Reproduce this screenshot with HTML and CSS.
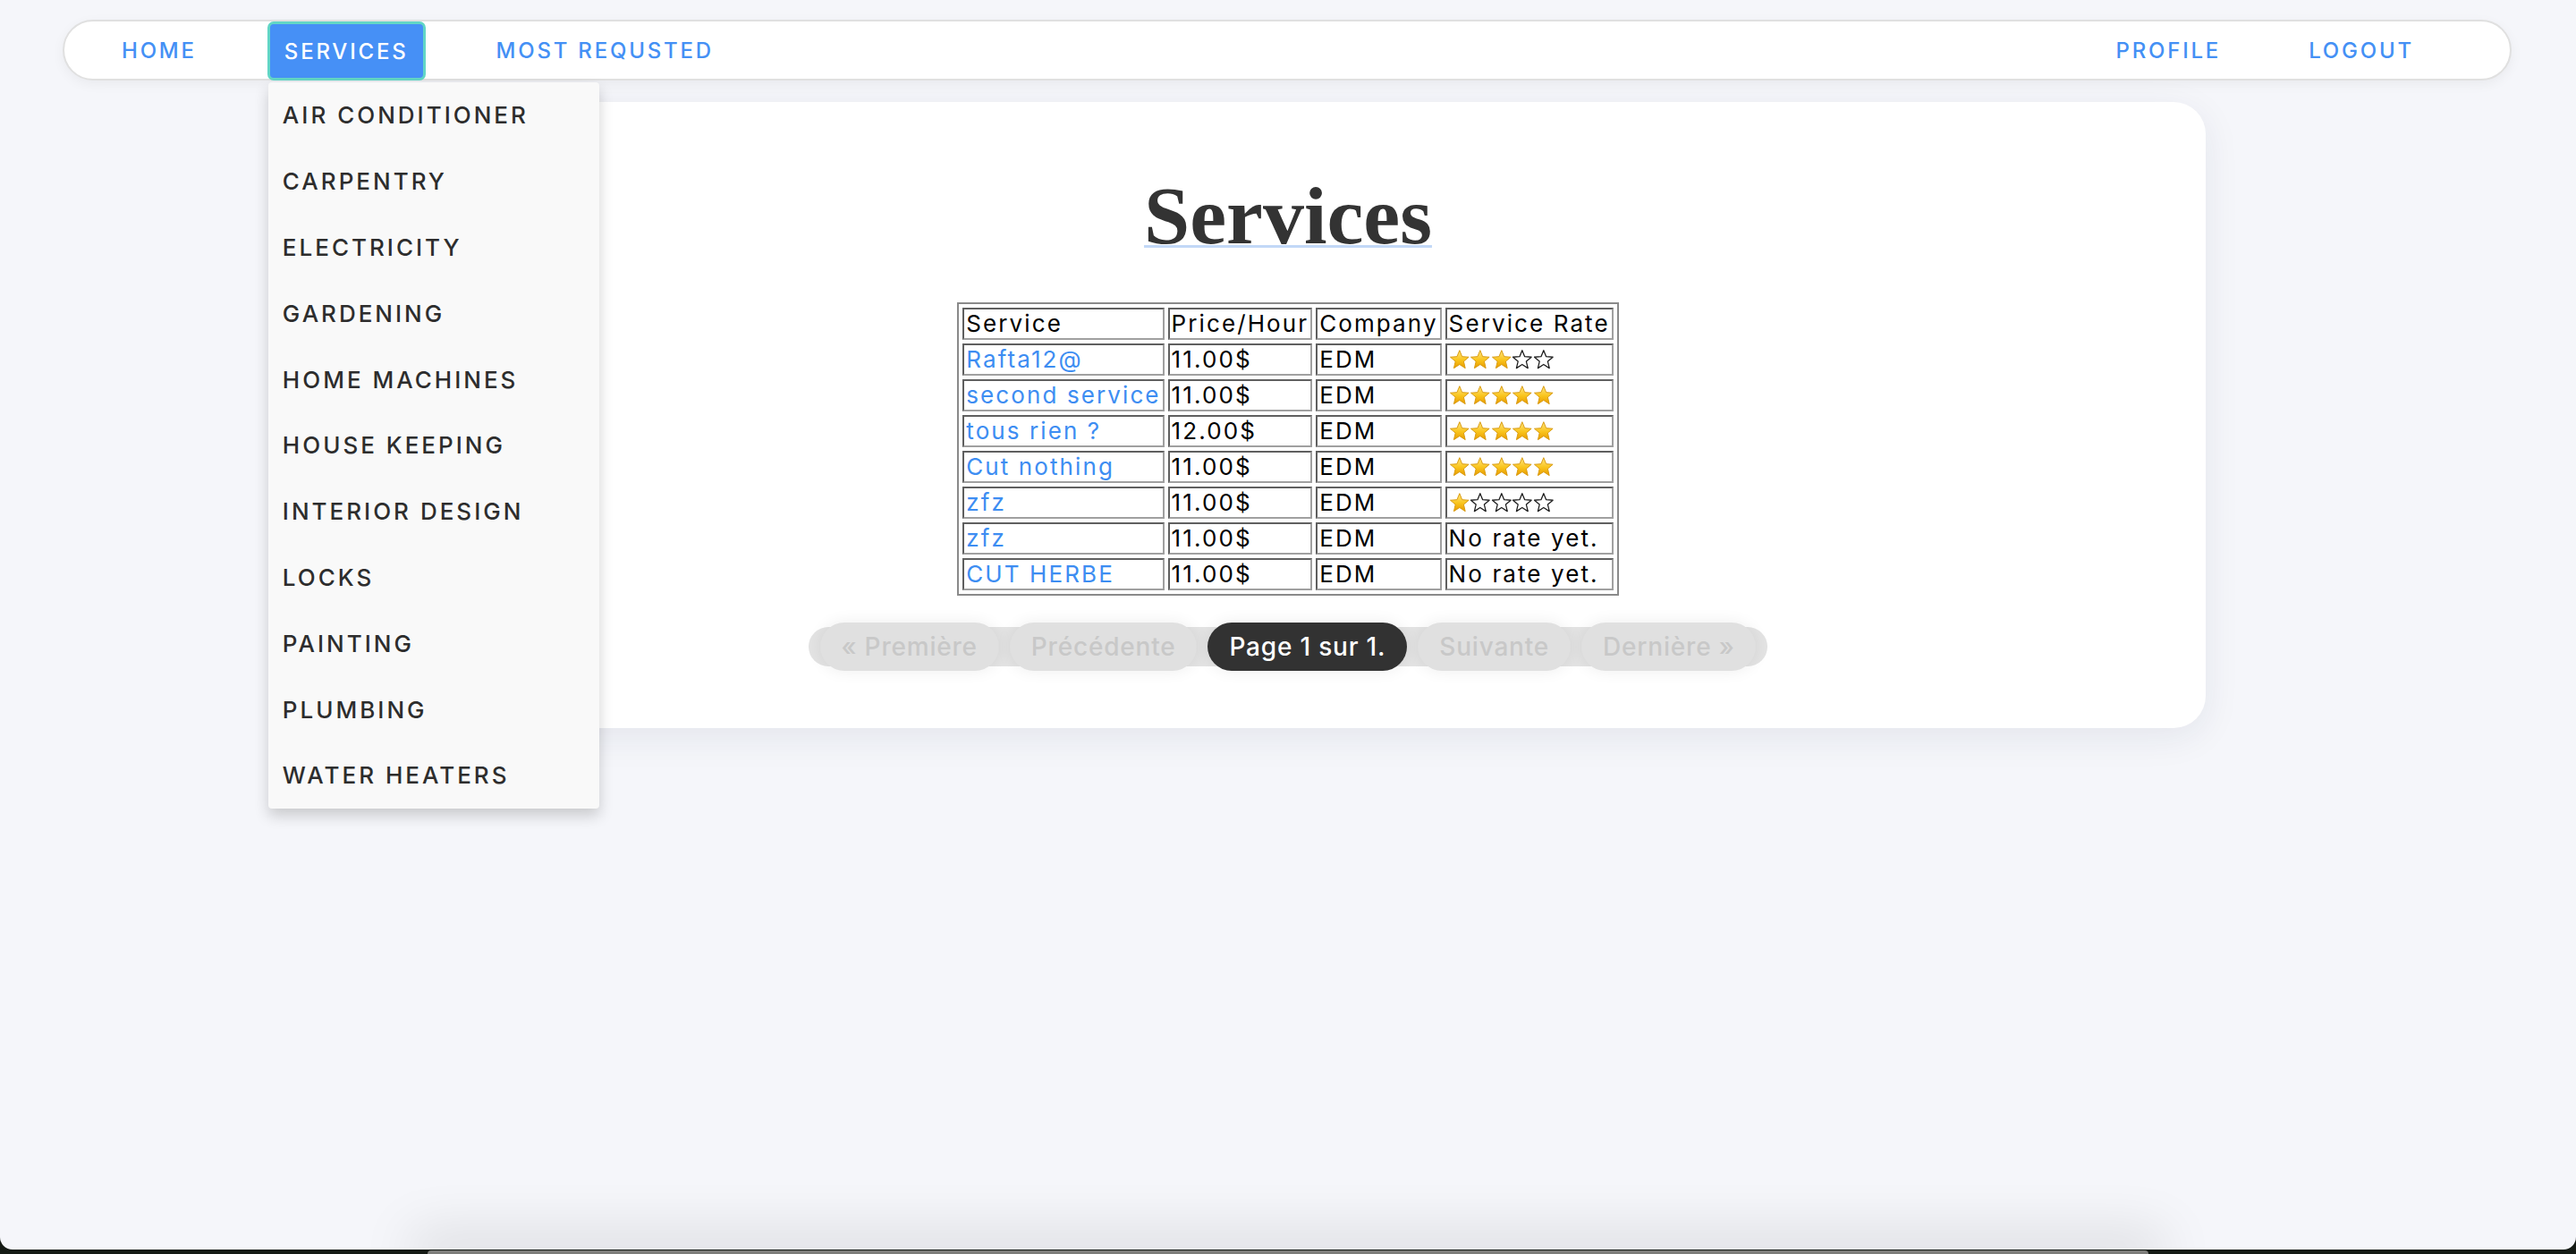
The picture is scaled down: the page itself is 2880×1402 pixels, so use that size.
FILE: index.html
```html
<!DOCTYPE html>
<html lang="en">
<head>
<meta charset="utf-8">
<title>Services</title>
<link rel="stylesheet" href="styles.css">
</head>
<body>
<svg class="defs" width="0" height="0" aria-hidden="true">
  <defs>
    <linearGradient id="gold" x1="0" y1="0" x2="0" y2="1">
      <stop offset="0" stop-color="#ffe680"/>
      <stop offset="0.55" stop-color="#f9c41c"/>
      <stop offset="1" stop-color="#e89a00"/>
    </linearGradient>
    <symbol id="star-full" viewBox="0 0 24 24">
      <polygon points="12,1.5 14.9,8.6 22.5,9.2 16.7,14.1 18.5,21.8 12,17.6 5.5,21.8 7.3,14.1 1.5,9.2 9.1,8.6" fill="url(#gold)" stroke="#d89a10" stroke-width="1" stroke-linejoin="round"/>
    </symbol>
    <symbol id="star-empty" viewBox="0 0 24 24">
      <polygon points="12,1.5 14.9,8.6 22.5,9.2 16.7,14.1 18.5,21.8 12,17.6 5.5,21.8 7.3,14.1 1.5,9.2 9.1,8.6" fill="#fff" stroke="#1e1e1e" stroke-width="1.3" stroke-linejoin="round"/>
    </symbol>
  </defs>
</svg>
<div class="window">
  <nav class="topnav">
    <ul class="nav-group">
      <li><a class="nav-link" href="#">HOME</a></li>
      <li class="has-menu">
        <a class="nav-link active" href="#">SERVICES</a>
        <ul class="dropdown">
          <li><a href="#">AIR CONDITIONER</a></li>
          <li><a href="#">CARPENTRY</a></li>
          <li><a href="#">ELECTRICITY</a></li>
          <li><a href="#">GARDENING</a></li>
          <li><a href="#">HOME MACHINES</a></li>
          <li><a href="#">HOUSE KEEPING</a></li>
          <li><a href="#">INTERIOR DESIGN</a></li>
          <li><a href="#">LOCKS</a></li>
          <li><a href="#">PAINTING</a></li>
          <li><a href="#">PLUMBING</a></li>
          <li><a href="#">WATER HEATERS</a></li>
        </ul>
      </li>
      <li><a class="nav-link" href="#">MOST REQUSTED</a></li>
    </ul>
    <ul class="nav-group">
      <li><a class="nav-link" href="#">PROFILE</a></li>
      <li><a class="nav-link" href="#">LOGOUT</a></li>
    </ul>
  </nav>

  <main class="card">
    <h1 class="title"><a href="#">Services</a></h1>
    <table class="services">
      <tr><td>Service</td><td>Price/Hour</td><td>Company</td><td>Service Rate</td></tr>
      <tr><td><a href="#">Rafta12@</a></td><td>11.00$</td><td>EDM</td>
        <td class="rate"><svg class="star"><use href="#star-full"/></svg><svg class="star"><use href="#star-full"/></svg><svg class="star"><use href="#star-full"/></svg><svg class="star"><use href="#star-empty"/></svg><svg class="star"><use href="#star-empty"/></svg></td></tr>
      <tr><td><a href="#">second service</a></td><td>11.00$</td><td>EDM</td>
        <td class="rate"><svg class="star"><use href="#star-full"/></svg><svg class="star"><use href="#star-full"/></svg><svg class="star"><use href="#star-full"/></svg><svg class="star"><use href="#star-full"/></svg><svg class="star"><use href="#star-full"/></svg></td></tr>
      <tr><td><a href="#">tous rien ?</a></td><td>12.00$</td><td>EDM</td>
        <td class="rate"><svg class="star"><use href="#star-full"/></svg><svg class="star"><use href="#star-full"/></svg><svg class="star"><use href="#star-full"/></svg><svg class="star"><use href="#star-full"/></svg><svg class="star"><use href="#star-full"/></svg></td></tr>
      <tr><td><a href="#">Cut nothing</a></td><td>11.00$</td><td>EDM</td>
        <td class="rate"><svg class="star"><use href="#star-full"/></svg><svg class="star"><use href="#star-full"/></svg><svg class="star"><use href="#star-full"/></svg><svg class="star"><use href="#star-full"/></svg><svg class="star"><use href="#star-full"/></svg></td></tr>
      <tr><td><a href="#">zfz</a></td><td>11.00$</td><td>EDM</td>
        <td class="rate"><svg class="star"><use href="#star-full"/></svg><svg class="star"><use href="#star-empty"/></svg><svg class="star"><use href="#star-empty"/></svg><svg class="star"><use href="#star-empty"/></svg><svg class="star"><use href="#star-empty"/></svg></td></tr>
      <tr><td><a href="#">zfz</a></td><td>11.00$</td><td>EDM</td><td>No rate yet.</td></tr>
      <tr><td><a href="#">CUT HERBE</a></td><td>11.00$</td><td>EDM</td><td>No rate yet.</td></tr>
    </table>

    <div class="pager">
      <span class="pill">« Première</span>
      <span class="pill">Précédente</span>
      <span class="pill current">Page 1 sur 1.</span>
      <span class="pill">Suivante</span>
      <span class="pill">Dernière »</span>
    </div>
  </main>

  <div class="footer-shadow"></div>
</div>
<div class="peek"></div>
</body>
</html>
```

FILE: styles.css
```css
html, body {
  margin: 0;
  padding: 0;
}

body {
  background: #141a14;
  font-family: "Inter", "Open Sans", sans-serif;
}

.defs {
  position: absolute;
  width: 0;
  height: 0;
}

.window {
  height: 1397px;
  background: #f5f6fa;
  border-radius: 0 0 14px 14px;
  overflow: hidden;
  display: flex;
  flex-direction: column;
}

/* ---------- top navigation ---------- */
.topnav {
  position: relative;
  z-index: 10;
  margin: 22px 72px 0 70px;
  height: 68px;
  box-sizing: border-box;
  border: 2px solid #e0e0e0;
  border-radius: 34px;
  background: #fff;
  box-shadow: 0 4px 14px rgba(0, 0, 0, 0.05);
  display: flex;
  justify-content: space-between;
  padding: 0 88px 0 45px;
  flex-shrink: 0;
}

.nav-group {
  list-style: none;
  margin: 0;
  padding: 0;
  display: flex;
  gap: 60px;
  height: 100%;
}

.nav-group > li {
  height: 100%;
  position: relative;
}

.nav-link {
  display: flex;
  align-items: center;
  box-sizing: border-box;
  height: 100%;
  padding: 0 19px;
  color: #4490f5;
  font-size: 24px;
  font-weight: 500;
  letter-spacing: 2.8px;
  text-decoration: none;
}

.nav-link.active {
  height: calc(100% + 2px);
  padding: 0 16px;
  background: #4690f6;
  color: #fff;
  border: 3px solid #62d6c6;
  border-radius: 7px;
}

.dropdown {
  position: absolute;
  top: calc(100% + 4px);
  left: 1px;
  width: 370px;
  margin: 0;
  padding: 0;
  list-style: none;
  background: #f9f9f9;
  border-radius: 4px;
  box-shadow: 0 8px 16px rgba(0, 0, 0, 0.18);
  z-index: 20;
}

.dropdown li a {
  display: flex;
  align-items: center;
  height: 73.8px;
  padding-left: 16px;
  color: #2d2d2d;
  font-size: 26px;
  font-weight: 500;
  letter-spacing: 3px;
  text-decoration: none;
}

/* ---------- main card ---------- */
.card {
  margin: 24px 414px 0;
  height: 700px;
  box-sizing: border-box;
  padding-top: 81px;
  background: #fff;
  border-radius: 36px;
  box-shadow: 0 10px 40px rgba(30, 40, 80, 0.08);
  display: flex;
  flex-direction: column;
  align-items: center;
  flex-shrink: 0;
}

.title {
  margin: 0;
  font-family: "Liberation Serif", "Times New Roman", serif;
  font-size: 92px;
  font-weight: bold;
  line-height: 1;
}

.title a {
  color: #333;
  text-decoration: underline;
  text-decoration-color: #c2d8f7;
  text-decoration-thickness: 3px;
  text-underline-offset: 2px;
}

.services {
  margin-top: 51px;
  border: 2px solid #8a8a8a;
  border-collapse: separate;
  border-spacing: 4px;
  font-size: 26px;
  letter-spacing: 2.1px;
  color: #000;
}

.services td {
  border: 2px solid #5f5f5f;
  border-right-color: #a0a0a0;
  border-bottom-color: #a0a0a0;
  padding: 1px 2px;
  height: 30px;
  white-space: nowrap;
  line-height: 30px;
}

.services td a {
  color: #3d8df2;
  text-decoration: none;
}

.services td.rate {
  line-height: 0;
}

.star {
  width: 23.6px;
  height: 24px;
  vertical-align: middle;
}

/* ---------- pagination ---------- */
.pager {
  margin-top: 35px;
  display: flex;
  align-items: center;
  gap: 12px;
  height: 44px;
  padding: 0 13px;
  background: #e3e3e3;
  border-radius: 22px;
}

.pill {
  display: flex;
  align-items: center;
  height: 54px;
  padding: 0 24px;
  border-radius: 27px;
  background: #e0e0e0;
  color: #c8c8c8;
  font-size: 28px;
  font-weight: 500;
  letter-spacing: 0.8px;
  box-shadow: 0 0 18px rgba(0, 0, 0, 0.07);
  white-space: nowrap;
}

.pill.current {
  background: #323232;
  color: #fff;
}

/* ---------- bottom ---------- */
.footer-shadow {
  margin: auto 478px 0;
  height: 0;
  box-shadow: 0 0 60px 18px rgba(0, 0, 0, 0.13);
  flex-shrink: 0;
}

.peek {
  margin: 1px 478px 0;
  height: 4px;
  background: #7d7d7a;
  border-radius: 4px 4px 0 0;
}
```
